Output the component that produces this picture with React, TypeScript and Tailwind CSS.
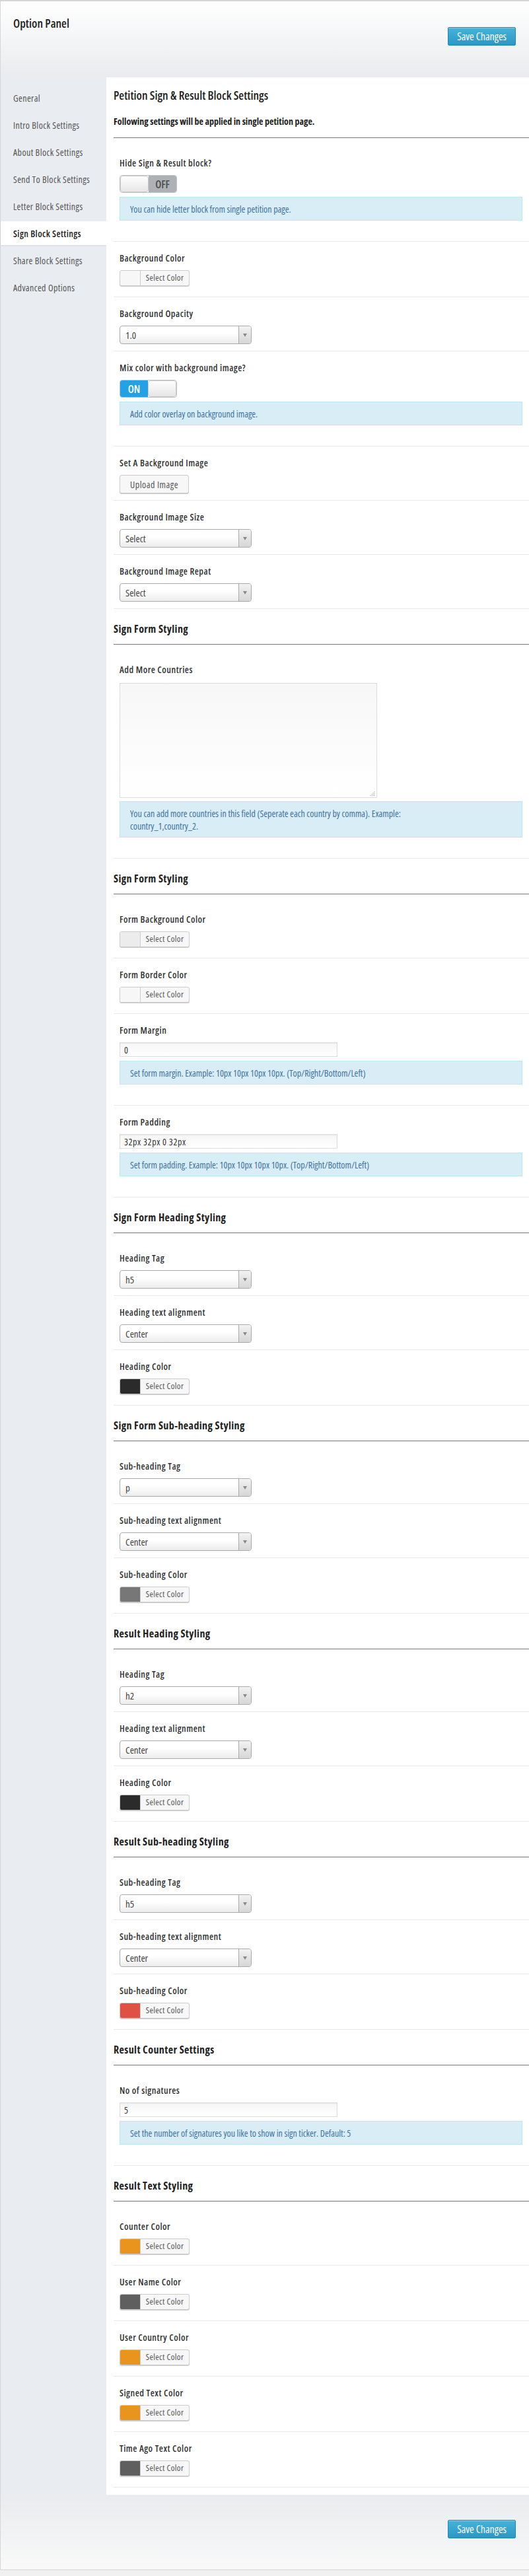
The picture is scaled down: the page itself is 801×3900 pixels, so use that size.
import { useState } from "react";

type Field =
  | { kind: "toggle"; label: string; on: boolean; help: string }
  | { kind: "color"; label: string; color: string }
  | { kind: "select"; label: string; value: string }
  | { kind: "upload"; label: string }
  | { kind: "textarea"; label: string; help: string }
  | { kind: "input"; label: string; value: string; help: string };

interface Section {
  title?: string;
  fields: Field[];
}

const MENU = [
  "General",
  "Intro Block Settings",
  "About Block Settings",
  "Send To Block Settings",
  "Letter Block Settings",
  "Sign Block Settings",
  "Share Block Settings",
  "Advanced Options",
];

const SECTIONS: Section[] = [
  {
    fields: [
      { kind: "toggle", label: "Hide Sign & Result block?", on: false, help: "You can hide letter block from single petition page." },
      { kind: "color", label: "Background Color", color: "#f7f7f7" },
      { kind: "select", label: "Background Opacity", value: "1.0" },
      { kind: "toggle", label: "Mix color with background image?", on: true, help: "Add color overlay on background image." },
      { kind: "upload", label: "Set A Background Image" },
      { kind: "select", label: "Background Image Size", value: "Select" },
      { kind: "select", label: "Background Image Repat", value: "Select" },
    ],
  },
  {
    title: "Sign Form Styling",
    fields: [
      {
        kind: "textarea",
        label: "Add More Countries",
        help: "You can add more countries in this field (Seperate each country by comma). Example:\ncountry_1,country_2.",
      },
    ],
  },
  {
    title: "Sign Form Styling",
    fields: [
      { kind: "color", label: "Form Background Color", color: "#ececec" },
      { kind: "color", label: "Form Border Color", color: "#f7f7f7" },
      { kind: "input", label: "Form Margin", value: "0", help: "Set form margin. Example: 10px 10px 10px 10px. (Top/Right/Bottom/Left)" },
      { kind: "input", label: "Form Padding", value: "32px 32px 0 32px", help: "Set form padding. Example: 10px 10px 10px 10px. (Top/Right/Bottom/Left)" },
    ],
  },
  {
    title: "Sign Form Heading Styling",
    fields: [
      { kind: "select", label: "Heading Tag", value: "h5" },
      { kind: "select", label: "Heading text alignment", value: "Center" },
      { kind: "color", label: "Heading Color", color: "#2b2b2b" },
    ],
  },
  {
    title: "Sign Form Sub-heading Styling",
    fields: [
      { kind: "select", label: "Sub-heading Tag", value: "p" },
      { kind: "select", label: "Sub-heading text alignment", value: "Center" },
      { kind: "color", label: "Sub-heading Color", color: "#777777" },
    ],
  },
  {
    title: "Result Heading Styling",
    fields: [
      { kind: "select", label: "Heading Tag", value: "h2" },
      { kind: "select", label: "Heading text alignment", value: "Center" },
      { kind: "color", label: "Heading Color", color: "#2b2b2b" },
    ],
  },
  {
    title: "Result Sub-heading Styling",
    fields: [
      { kind: "select", label: "Sub-heading Tag", value: "h5" },
      { kind: "select", label: "Sub-heading text alignment", value: "Center" },
      { kind: "color", label: "Sub-heading Color", color: "#e05143" },
    ],
  },
  {
    title: "Result Counter Settings",
    fields: [
      { kind: "input", label: "No of signatures", value: "5", help: "Set the number of signatures you like to show in sign ticker. Default: 5" },
    ],
  },
  {
    title: "Result Text Styling",
    fields: [
      { kind: "color", label: "Counter Color", color: "#e8941d" },
      { kind: "color", label: "User Name Color", color: "#5f5f5f" },
      { kind: "color", label: "User Country Color", color: "#e8941d" },
      { kind: "color", label: "Signed Text Color", color: "#e8941d" },
      { kind: "color", label: "Time Ago Text Color", color: "#5f5f5f" },
    ],
  },
];

function SaveButton() {
  return (
    <button className="h-[28px] w-[103px] rounded-[2px] border border-[#1f88b4] bg-linear-to-b from-[#45b3da] to-[#2a98c4] text-[16px] leading-none text-white shadow-[inset_0_1px_0_rgba(255,255,255,0.35)]">
      Save Changes
    </button>
  );
}

function Toggle({ on }: { on: boolean }) {
  const knob = (
    <div className="h-full w-[44px] rounded-[4px] border border-[#c9c9c9] bg-linear-to-b from-white to-[#e6e6e6]" />
  );
  return (
    <div className="flex h-[27px] w-[87px] overflow-hidden rounded-[4px] border border-[#bfc3c7]">
      {on ? (
        <>
          <div className="flex w-[43px] items-center justify-center bg-[#24a0e4] text-[16px] font-semibold text-white">ON</div>
          {knob}
        </>
      ) : (
        <>
          {knob}
          <div className="flex w-[43px] items-center justify-center bg-[#aeb2b6] text-[16px] font-semibold text-[#4d4d4d]">OFF</div>
        </>
      )}
    </div>
  );
}

function SelectBox({ value }: { value: string }) {
  return (
    <div className="flex h-[28px] w-[200px] overflow-hidden rounded-[4px] border border-[#aaa] bg-linear-to-b from-white from-40% to-[#ececec]">
      <div className="flex flex-1 items-center pl-[8px] text-[15px] text-[#444]">{value}</div>
      <div className="flex w-[19px] items-center justify-center border-l border-[#aaa] bg-linear-to-b from-[#f2f2f2] to-[#d6d6d6]">
        <svg width="6" height="5" viewBox="0 0 6 5">
          <path d="M0 0h6L3 5z" fill="#888" />
        </svg>
      </div>
    </div>
  );
}

function ColorButton({ color }: { color: string }) {
  return (
    <div className="mb-[6px] flex h-[24px] w-[106px] overflow-hidden rounded-[3px] border border-[#ccc] bg-[#f7f7f7] shadow-[0_1px_0_#ccc]">
      <div className="w-[31px] border-r border-[#ccc]" style={{ backgroundColor: color }} />
      <div className="flex flex-1 items-center justify-center text-[13px] tracking-[0.4px] text-[#555]">Select Color</div>
    </div>
  );
}

function Help({ text }: { text: string }) {
  return (
    <div className="mb-[21px] mt-[6px] whitespace-pre-line border border-[#bce8f1] bg-[#d9edf7] px-[15px] py-[7.5px] text-[14px] leading-[19px] text-[#3f7399]">
      {text}
    </div>
  );
}

function FieldRow({ field }: { field: Field }) {
  return (
    <div className="border-b border-[#e8e8e8] pb-[10px] pl-[9px] pr-[10px] pt-[15px]">
      <div className="text-[14px] font-semibold leading-[20px] tracking-[0.5px] text-[#333]">{field.label}</div>
      {field.kind === "toggle" && (
        <>
          <div className="mt-[8px]">
            <Toggle on={field.on} />
          </div>
          <Help text={field.help} />
        </>
      )}
      {field.kind === "color" && (
        <div className="mt-[8px]">
          <ColorButton color={field.color} />
        </div>
      )}
      {field.kind === "select" && (
        <div className="mt-[8px]">
          <SelectBox value={field.value} />
        </div>
      )}
      {field.kind === "upload" && (
        <div className="mt-[8px]">
          <button className="h-[28px] w-[105px] rounded-[3px] border border-[#ccc] bg-[#f7f7f7] text-[14px] tracking-[0.5px] text-[#555] shadow-[0_1px_0_#ccc]">
            Upload Image
          </button>
        </div>
      )}
      {field.kind === "textarea" && (
        <>
          <div className="relative mt-[10px] h-[174px] w-[390px] border border-[#dcdcdc] bg-linear-to-b from-[#f7f7f7] to-white">
            <svg className="absolute bottom-[2px] right-[2px]" width="8" height="8" viewBox="0 0 8 8">
              <path d="M7 1v1M5 3v1M7 3v1M3 5v1M5 5v1M7 5v1M1 7v1M3 7v1M5 7v1M7 7v1" stroke="#999" strokeWidth="1" />
            </svg>
          </div>
          <div className="-mt-[1px]">
            <Help text={field.help} />
          </div>
        </>
      )}
      {field.kind === "input" && (
        <>
          <div className="mt-[8px] flex h-[22px] w-[330px] items-center border border-[#dcdcdc] bg-linear-to-b from-[#f6f6f6] to-white pl-[6px] text-[14px] tracking-[0.6px] text-[#333] shadow-[inset_0_1px_2px_rgba(0,0,0,0.07)]">
            {field.value}
          </div>
          <Help text={field.help} />
        </>
      )}
    </div>
  );
}

export default function App() {
  const [active, setActive] = useState("Sign Block Settings");

  return (
    <div className="min-h-[3900px] bg-[#f1f1f1] font-['Open_Sans',sans-serif] [font-stretch:75%]">
      <div className="border-b border-l border-t-2 border-[#d6d6d6]">
        {/* header */}
        <div className="flex h-[115px] items-start justify-between bg-linear-to-b from-white to-[#e9ebee] pl-[19px] pr-[20px] pt-[21px]">
          <h1 className="text-[18px] font-semibold leading-[24px] text-[#222]">Option Panel</h1>
          <div className="mt-[18px]">
            <SaveButton />
          </div>
        </div>

        <div className="flex">
          <ul className="flex w-[160px] shrink-0 flex-col gap-[5px] bg-[#e9ecf0] pt-[13px]">
            {MENU.map((item) => (
              <li
                key={item}
                onClick={() => setActive(item)}
                className={`flex h-[36px] cursor-pointer items-center whitespace-nowrap px-[19px] text-[14px] tracking-[0.4px] ${
                  item === active
                    ? "bg-white font-semibold text-[#222] shadow-[0_1px_2px_rgba(0,0,0,0.08)]"
                    : "text-[#555]"
                }`}
              >
                {item}
              </li>
            ))}
          </ul>

          <div className="min-w-0 flex-1 bg-white pb-[11px] pl-[11px] pt-[15px]">
            <div className="border-b border-[#777] pb-[14px]">
              <h2 className="text-[18px] font-semibold leading-[24px] text-[#222]">
                Petition Sign &amp; Result Block Settings
              </h2>
              <p className="mt-[18px] text-[14px] font-bold leading-[20px] text-[#222]">
                Following settings will be applied in single petition page.
              </p>
            </div>

            {SECTIONS.map((section, i) => (
              <div key={i}>
                {section.title && (
                  <div className="border-b border-[#777] pb-[13px] pt-[20px]">
                    <h3 className="text-[16px] font-bold leading-[20px] tracking-[0.4px] text-[#222]">{section.title}</h3>
                  </div>
                )}
                <div className="mt-[13px]">
                  {section.fields.map((field) => (
                    <FieldRow key={field.label + i} field={field} />
                  ))}
                </div>
              </div>
            ))}
          </div>
        </div>

        {/* footer */}
        <div className="flex h-[113px] items-start justify-end bg-linear-to-b from-[#e9ebee] to-[#f9f9f9] pr-[20px] pt-[38px]">
          <SaveButton />
        </div>
      </div>
    </div>
  );
}
